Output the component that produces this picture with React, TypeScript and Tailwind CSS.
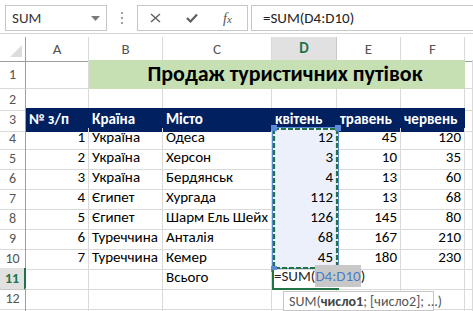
import React from 'react';

const FONT = "font-['Carlito','Liberation_Sans',sans-serif]";
const COLS = 'grid grid-cols-[26px_63px_74px_109px_65px_64px_64px_1fr]';
const CELL = 'border-r border-b border-[#dadada] px-[3px] flex items-end pb-[1px] whitespace-nowrap overflow-hidden';

const data: [number, string, string, number, number, number][] = [
  [1, 'Україна', 'Одеса', 12, 45, 120],
  [2, 'Україна', 'Херсон', 3, 10, 35],
  [3, 'Україна', 'Бердянськ', 4, 13, 60],
  [4, 'Єгипет', 'Хургада', 112, 13, 68],
  [5, 'Єгипет', 'Шарм Ель Шейх', 126, 145, 80],
  [6, 'Туреччина', 'Анталія', 68, 167, 210],
  [7, 'Туреччина', 'Кемер', 45, 180, 230],
];

function RowHead({ n, active }: { n?: number; active?: boolean }) {
  return active ? (
    <div className="bg-[#e1e1e1] border-r-2 border-r-[#217346] border-b border-b-[#c8c8c8] flex items-center justify-center text-[#217346] font-bold text-[14px]">
      {n}
    </div>
  ) : (
    <div className="border-r border-r-[#9e9e9e] border-b border-b-[#dadada] flex items-center justify-center text-[#555] text-[14px]">
      {n}
    </div>
  );
}

function ColHead({ l, active }: { l: string; active?: boolean }) {
  return active ? (
    <div className="bg-[#e1e1e1] border-r border-r-[#c8c8c8] border-b-2 border-b-[#217346] flex items-center justify-center text-[#217346] font-bold text-[15px]">
      {l}
    </div>
  ) : (
    <div className="border-r border-r-[#dadada] border-b border-b-[#9e9e9e] flex items-center justify-center text-[#555] text-[15px]">
      {l}
    </div>
  );
}

export default function App() {
  return (
    <div className={`relative w-[473px] h-[311px] overflow-hidden bg-white text-[15px] text-black ${FONT}`}>
      {/* Formula bar */}
      <div className="h-[34px] border-b border-[#d5d5d5] flex items-start pt-[5px] pl-[5px]">
        <div className="w-[102px] h-[26px] border border-[#c6c6c6] flex items-center justify-between pl-[6px] pr-[6px] text-[#333]">
          <span>SUM</span>
          <svg width="9" height="5" viewBox="0 0 9 5"><polygon points="0,0 9,0 4.5,5" fill="#7a7a7a" /></svg>
        </div>
        <div className="w-[30px] h-[26px] flex flex-col items-center justify-center gap-[3px]">
          <span className="w-[2px] h-[2px] bg-[#a0a0a0]" />
          <span className="w-[2px] h-[2px] bg-[#a0a0a0]" />
          <span className="w-[2px] h-[2px] bg-[#a0a0a0]" />
        </div>
        <div className="w-[111px] h-[26px] border border-[#c6c6c6] flex items-center pl-[12px]">
          <svg width="11" height="10" viewBox="0 0 11 10"><path d="M1 1 L10 9 M10 1 L1 9" stroke="#5f5f5f" strokeWidth="1.4" /></svg>
          <svg className="ml-[25px]" width="12" height="10" viewBox="0 0 12 10"><path d="M1 5 L4.5 8.5 L11 1.5" stroke="#5f5f5f" strokeWidth="2.2" fill="none" /></svg>
          <span className="ml-[25px] italic text-[#555] text-[14px] font-['Liberation_Serif',serif]">f<span className="text-[11px]">x</span></span>
        </div>
        <div className="flex-1 h-[26px] ml-[3px] border-t border-l border-b border-[#c6c6c6] flex items-center pl-[11px] text-[#222]">
          =SUM(D4:D10)
        </div>
      </div>
      <div className="h-[3px]" />

      {/* Column headers */}
      <div className={`${COLS} h-[23px]`}>
        <div className="border-r border-r-[#9e9e9e] border-b border-b-[#9e9e9e] relative">
          <svg className="absolute left-[10px] top-[8px]" width="12" height="12" viewBox="0 0 12 12"><polygon points="12,0 12,12 0,12" fill="#dcdcdc" /></svg>
        </div>
        <ColHead l="A" />
        <ColHead l="B" />
        <ColHead l="C" />
        <ColHead l="D" active />
        <ColHead l="E" />
        <ColHead l="F" />
        <div className="border-b border-b-[#9e9e9e]" />
      </div>

      {/* Row 1 */}
      <div className={`${COLS} h-[29px]`}>
        <RowHead n={1} />
        <div className={CELL} />
        <div className="col-span-5 bg-[#c6e0b4] border-b border-[#c6e0b4] flex items-end pb-[1px] justify-center pl-[16px] font-bold text-[22px] leading-[26px]">
          Продаж туристичних путівок
        </div>
        <div className={CELL} />
      </div>

      {/* Row 2 */}
      <div className={`${COLS} h-[19px]`}>
        <RowHead n={2} />
        {[0, 1, 2, 3, 4, 5, 6].map((i) => (
          <div key={i} className={CELL} />
        ))}
      </div>

      {/* Row 3 header */}
      <div className={`${COLS} h-[20px]`}>
        <RowHead n={3} />
        {['№ з/п', 'Країна', 'Місто', 'квітень', 'травень', 'червень'].map((t) => (
          <div key={t} className="bg-[#002060] text-white font-bold px-[3px] flex items-end pb-[1px] whitespace-nowrap">
            {t}
          </div>
        ))}
        <div className={CELL} />
      </div>

      {/* Data */}
      {data.map((r, i) => (
        <div key={i} className={`${COLS} h-[20px]`}>
          <RowHead n={i + 4} />
          <div className={`${CELL} justify-end`}>{r[0]}</div>
          <div className={CELL}>{r[1]}</div>
          <div className={CELL}>{r[2]}</div>
          <div className={`${CELL} justify-end bg-[#ecf0fa]`}>{r[3]}</div>
          <div className={`${CELL} justify-end`}>{r[4]}</div>
          <div className={`${CELL} justify-end`}>{r[5]}</div>
          <div className={CELL} />
        </div>
      ))}

      {/* Row 11 */}
      <div className={`${COLS} h-[20px]`}>
        <RowHead n={11} active />
        <div className={CELL} />
        <div className={CELL} />
        <div className={CELL}>Всього</div>
        <div className={CELL} />
        <div className={CELL} />
        <div className={CELL} />
        <div className={CELL} />
      </div>

      {/* Row 12 */}
      <div className={`${COLS} h-[20px]`}>
        <RowHead n={12} />
        {[0, 1, 2, 3, 4, 5, 6].map((i) => (
          <div key={i} className={CELL} />
        ))}
      </div>
      {/* Row 13 (only top edge visible) */}
      <div className={`${COLS} h-[20px]`}>
        <RowHead />
        {[0, 1, 2, 3, 4, 5, 6].map((i) => (
          <div key={i} className={CELL} />
        ))}
      </div>

      {/* Range finder: D4:D10 */}
      <div className="absolute left-[272px] top-[127px] w-[67px] h-[142px] border border-[#5b8bd6]" />
      <svg className="absolute left-[272px] top-[127px]" width="67" height="143" viewBox="0 0 67 143">
        <rect x="2" y="2" width="63" height="139" fill="none" stroke="#217346" strokeWidth="2.2" strokeDasharray="5 2" />
      </svg>
      <div className="absolute left-[271px] top-[125px] w-[6px] h-[6px] bg-[#5b8bd6]" />
      <div className="absolute left-[335px] top-[125px] w-[6px] h-[6px] bg-[#5b8bd6]" />
      <div className="absolute left-[271px] top-[266px] w-[6px] h-[6px] bg-[#5b8bd6]" />

      {/* In-cell editor D11 */}
      <div className="absolute left-[272px] top-[270px] w-[67px] h-[20px] border-l-2 border-b-2 border-[#217346]" />
      <div className="absolute left-[274px] top-[270px] h-[18px] pr-[2px] bg-white flex items-end pb-[1px] whitespace-nowrap text-[#222]">
        =SUM(<span className="bg-[#c8c8c8] text-[#4a7ec6]">D4:D10</span>)
      </div>

      {/* Tooltip */}
      <div className="absolute left-[283px] top-[291px] w-[151px] h-[20px] border border-[#c6c6c6] bg-white flex items-center pl-[5px] text-[14px] text-[#555] whitespace-nowrap">
        SUM(<b className="text-[#444]">число1</b>; [число2]; ...)
      </div>
    </div>
  );
}
